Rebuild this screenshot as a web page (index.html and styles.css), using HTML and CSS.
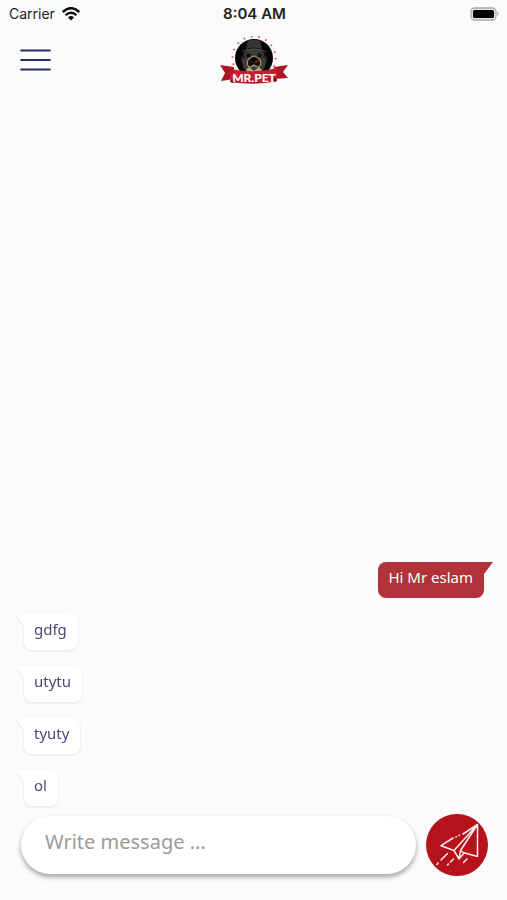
FILE: index.html
```html
<!DOCTYPE html>
<html lang="en">
<head>
<meta charset="utf-8">
<meta name="viewport" content="width=device-width, initial-scale=1">
<title>Mr.Pet chat</title>
<link rel="stylesheet" href="styles.css">
</head>
<body>
<div class="app">
  <div class="status">
    <div class="status-left">
      <span>Carrier</span>
      <svg class="wifi" viewBox="0 0 18 14" aria-hidden="true">
        <path d="M.8 5Q9-2.600 17.200 5M3.600 8.200Q9 3.200 14.400 8.200" fill="none" stroke="#111" stroke-width="2.500"/>
        <path d="M6 10.400Q9 7.600 12 10.400L9 13.600Z" fill="#111"/>
      </svg>
    </div>
    <time class="clock">8:04 AM</time>
    <div class="status-right">
      <svg class="battery" viewBox="0 0 30 14" aria-hidden="true">
        <rect x="1" y="1" width="25" height="12" rx="3.500" fill="#e4e4e4" stroke="#aaa" stroke-width="1.300"/>
        <rect x="3" y="3" width="21" height="8" rx="1.500" fill="#000"/>
        <path d="M27.500 4.800Q30 7 27.500 9.200Z" fill="#aaa"/>
      </svg>
    </div>
  </div>

  <header class="header">
    <button class="menu" type="button" aria-label="Menu">
      <svg viewBox="0 0 31 23" aria-hidden="true">
        <path d="M1.200 1.500H29.800M1.200 11H29.800M1.200 20.500H29.800" stroke="#2b2d66" stroke-width="2.200" stroke-linecap="round"/>
      </svg>
    </button>
    <svg class="logo" viewBox="0 0 70 48" role="img" aria-label="Mr.Pet">
      <circle cx="35" cy="22" r="21.500" fill="none" stroke="#cf5b68" stroke-width="2" stroke-dasharray="1.500 6"/>
      <circle cx="35" cy="22" r="19" fill="#050505"/>
      <path d="M27 13L28.500 5Q35 2.500 41.500 5L43 13Q35 10.500 27 13Z" fill="#353535"/>
      <path d="M22 16Q35 8.500 48 16Q35 13 22 16Z" fill="#4a4a48"/>
      <path d="M26 16Q35 12.500 44 16L48 23L45 33Q35 38 25 33L22 23Z" fill="#3d3c37"/>
      <path d="M25 16L21.500 24L26 22ZM45 16L48.500 24L44 22Z" fill="#22211f"/>
      <circle cx="29.500" cy="19.500" r="2.300" fill="#11100f"/>
      <circle cx="40.500" cy="19.500" r="2.300" fill="#11100f"/>
      <path d="M35 20Q27 22 28.500 29Q31 33 35 29Q39 33 41.500 29Q43 22 35 20Z" fill="#19130f" stroke="#a59574" stroke-width="1.200"/>
      <ellipse cx="35" cy="23.500" rx="2.600" ry="1.700" fill="#000"/>
      <path d="M36 26L41 24.500" stroke="#a92d22" stroke-width="1.200"/>
      <path d="M27 34L30 31L35 35L40 31L43 34L42 38H28Z" fill="#b8aa91"/>
      <path d="M1 29L15 31V43L2 45L6 37ZM69 29L55 31V43L69 42L64 36Z" fill="#ac1728"/>
      <path d="M12 33Q35 38 58 32V45Q35 50 11 46Z" fill="#c51e30"/>
      <path d="M11 46L15 42V47ZM58 45L55 41V46Z" fill="#720d19"/>
      <text x="35" y="46" text-anchor="middle" class="logo-text">MR.PET</text>
    </svg>
  </header>

  <main class="chat">
    <p class="bubble sent">Hi Mr eslam</p>
    <p class="bubble received">gdfg</p>
    <p class="bubble received">utytu</p>
    <p class="bubble received">tyuty</p>
    <p class="bubble received">ol</p>
  </main>

  <form class="composer">
    <input class="field" type="text" placeholder="Write message ..." aria-label="Message">
    <button class="send" type="button" aria-label="Send">
      <svg viewBox="0 0 62 62" aria-hidden="true">
        <g fill="none" stroke="#ffecec" stroke-width="1.500" stroke-linejoin="round" stroke-linecap="round">
          <path d="M37 20L51.500 10.500V42.500L37 38.500M27 24L15 31.700L28 36.500L51.500 10.500L34.500 36.500L33 45L28 36.500M34.500 36.500L38 39L33 45"/>
          <path d="M30 23L30.500 22.700M33 21.500L33.500 21.200M21.500 39.500L15 46M12 49L11 50.500M27.500 45L24.500 48M22.500 50L21.500 51M41 45L37.500 48.500"/>
        </g>
      </svg>
    </button>
  </form>
</div>
</body>
</html>
```
FILE: styles.css
```css
* {
  box-sizing: border-box;
}

body {
  margin: 0;
  background: #fbfbfb;
  font-family: "Noto Sans", sans-serif;
}

.app {
  display: flex;
  flex-direction: column;
  min-height: 100vh;
}

.status {
  display: grid;
  grid-template-columns: 1fr auto 1fr;
  align-items: center;
  height: 28px;
  padding: 0 7px 0 9px;
  font: 14px/20px Inter, sans-serif;
  color: #222;
}

.status-left {
  display: flex;
  align-items: center;
  gap: 7px;
}

.wifi {
  width: 18px;
  height: 14px;
}

.clock {
  font-size: 15px;
  font-weight: 600;
}

.status-right {
  display: flex;
  justify-content: flex-end;
}

.battery {
  width: 30px;
  height: 14px;
}

.header {
  display: grid;
  grid-template-columns: 1fr auto 1fr;
  align-items: center;
  height: 64px;
  padding: 0 20px;
}

.menu {
  width: 31px;
  height: 23px;
  padding: 0;
  border: 0;
  background: none;
}

.menu svg,
.send svg {
  display: block;
  width: 100%;
  height: 100%;
}

.logo {
  width: 70px;
  height: 48px;
}

.logo-text {
  font: 900 12px Lato, sans-serif;
  fill: #fff;
}

.chat {
  flex: 1;
  display: flex;
  flex-direction: column;
  justify-content: flex-end;
  align-items: flex-start;
  gap: 16px;
  padding: 0 23px 8px 24px;
}

.bubble {
  position: relative;
  height: 36px;
  margin: 0;
  padding: 5px 11px 5px 10px;
  border-radius: 8px;
  font-size: 15px;
  line-height: 20px;
}

.bubble::before {
  content: "";
  position: absolute;
  top: 0;
  width: 18px;
  height: 12px;
}

.received {
  background: #fff;
  color: #494a70;
  border-top-left-radius: 0;
  filter: drop-shadow(0 1px 1px #0000001a);
}

.received::before {
  left: -8px;
  background: #fff;
  clip-path: polygon(0 0, 100% 0, 8px 100%);
}

.sent {
  align-self: flex-end;
  background: #b23239;
  color: #fff;
  border-top-right-radius: 0;
}

.sent::before {
  right: -9px;
  background: #b23239;
  clip-path: polygon(0 0, 100% 0, 9px 100%);
}

.composer {
  display: flex;
  align-items: center;
  gap: 10px;
  padding: 0 19px 24px 21px;
}

.field {
  flex: 1;
  min-width: 0;
  height: 58px;
  padding: 0 24px 8px;
  border: 0;
  border-radius: 29px;
  background: #fff;
  box-shadow: 0 3px 5px #00000059;
  font: 20px/28px "Noto Sans", sans-serif;
  color: #494a70;
}

.field::placeholder {
  color: #9b9b9b;
  opacity: 1;
}

.send {
  flex: none;
  width: 62px;
  height: 62px;
  padding: 0;
  border: 0;
  border-radius: 50%;
  background: #b5121b;
}
```
